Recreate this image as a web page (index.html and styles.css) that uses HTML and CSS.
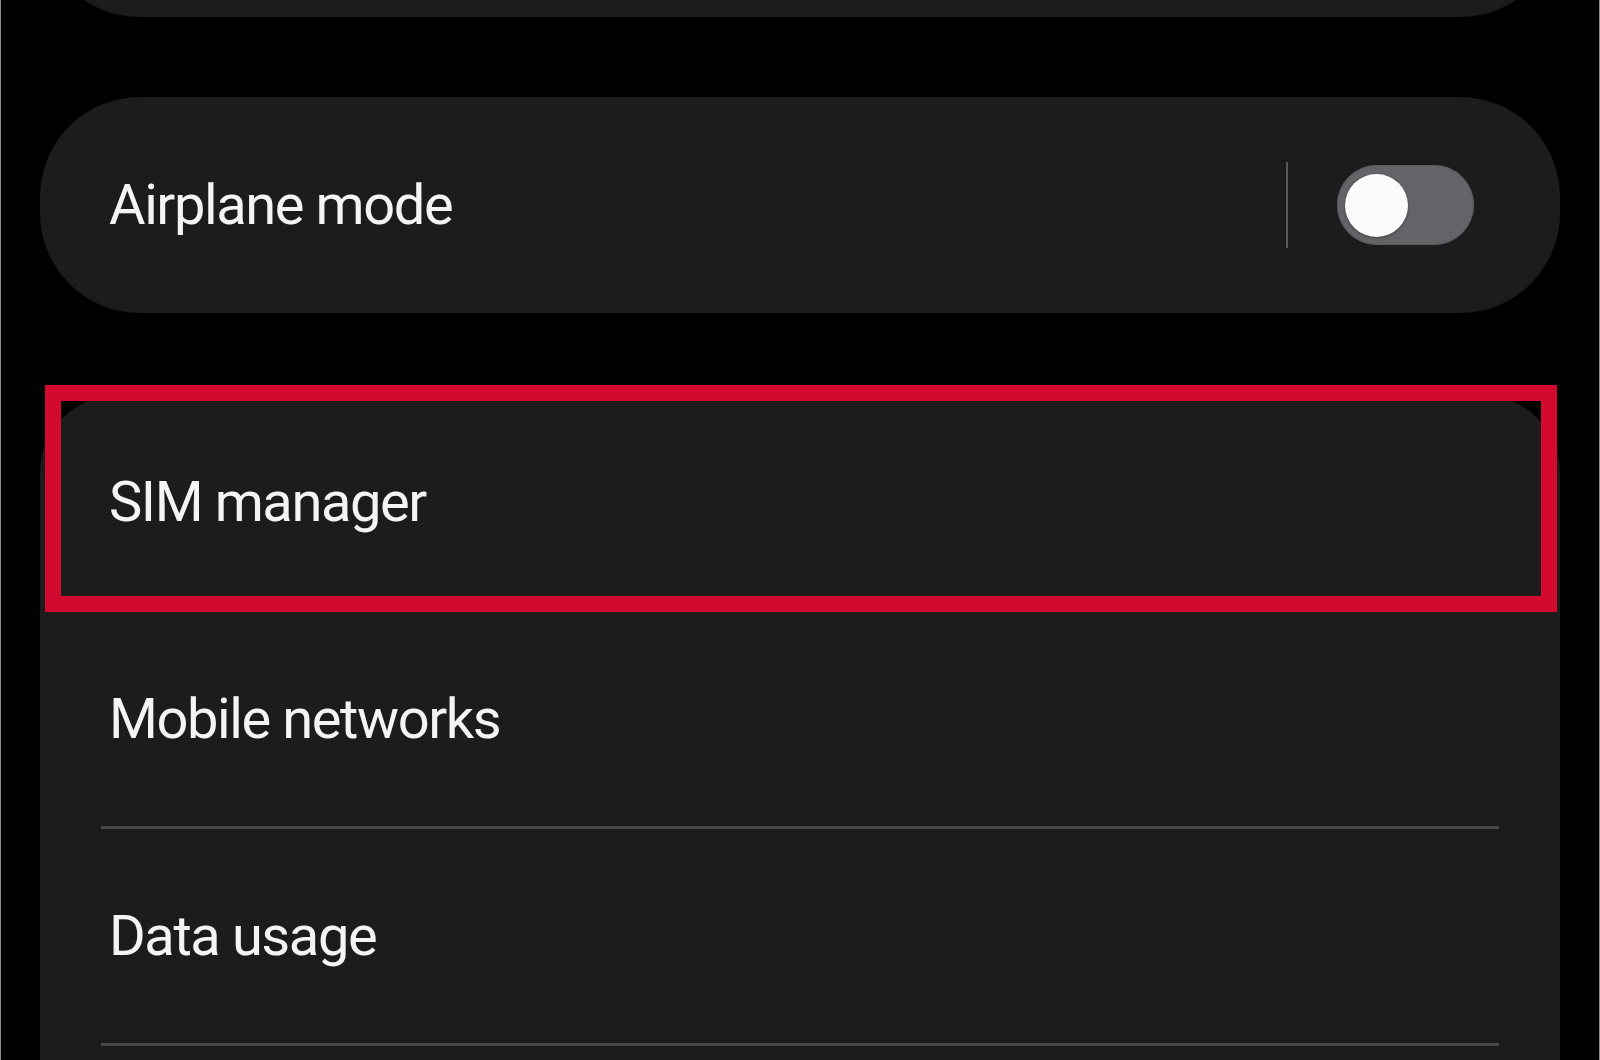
FILE: index.html
```html
<!DOCTYPE html>
<html lang="en">
<head>
    <meta charset="UTF-8">
    <meta name="viewport" content="width=device-width, initial-scale=1.0">
    <title>Connections</title>
    <link rel="stylesheet" href="styles.css">
</head>
<body>

<div class="screen">
    <!-- previous group, scrolled mostly out of view -->
    <div class="card card-partial"></div>

    <div class="card row-card">
        <span class="label">Airplane mode</span>
        <div class="row-end">
            <span class="vline"></span>
            <div class="switch">
                <span class="knob"></span>
            </div>
        </div>
    </div>

    <div class="list-wrap">
        <div class="card list-card">
            <div class="item"><span class="label">SIM manager</span></div>
            <div class="item"><span class="label">Mobile networks</span></div>
            <div class="item"><span class="label">Data usage</span></div>
        </div>
        <div class="highlight"></div>
    </div>
</div>

</body>
</html>
```

FILE: styles.css
```css
html, body {
    margin: 0;
    height: 100%;
    overflow: hidden;
}

body {
    background-color: #000;
    font-family: Roboto, "Noto Sans", Arial, sans-serif;
    border-left: 1px solid #8c8c8c;
    border-right: 1px solid #8c8c8c;
    box-sizing: border-box;
}

.screen {
    padding: 0 39px;
}

.card {
    background-color: #1c1c1d;
    border-radius: 100px;
}

.card-partial {
    height: 216px;
    margin-top: -199px;
}

.label {
    color: #f4f4f4;
    font-size: 56px;
    letter-spacing: -1.4px;
    white-space: nowrap;
}

.row-card {
    height: 216px;
    margin-top: 80px;
    display: flex;
    align-items: center;
    justify-content: space-between;
    padding: 0 86px 0 69px;
    box-sizing: border-box;
}

.row-end {
    display: flex;
    align-items: center;
    gap: 49px;
}

.vline {
    width: 2px;
    height: 86px;
    background-color: #59595b;
}

.switch {
    width: 137px;
    height: 80px;
    border-radius: 40px;
    background-color: #646368;
    box-shadow: inset 0 0 0 1px #5a595d;
    display: flex;
    align-items: center;
    padding-left: 8px;
    box-sizing: border-box;
}

.knob {
    width: 63px;
    height: 63px;
    border-radius: 50%;
    background-color: #fbfbfb;
    box-shadow: 0 1px 3px rgba(0, 0, 0, 0.35);
}

.list-wrap {
    position: relative;
    margin-top: 82px;
}

.list-card {
    border-radius: 78px;
    padding: 0 61px 200px;
}

.item {
    height: 217px;
    display: flex;
    align-items: center;
    border-bottom: 3px solid #48484b;
    box-sizing: border-box;
    padding-left: 8px;
}

/* red annotation box drawn over the SIM manager row */
.highlight {
    position: absolute;
    left: 5px;
    top: -10px;
    width: 1512px;
    height: 227px;
    border: 16px solid #d3092f;
    box-sizing: border-box;
}
```
